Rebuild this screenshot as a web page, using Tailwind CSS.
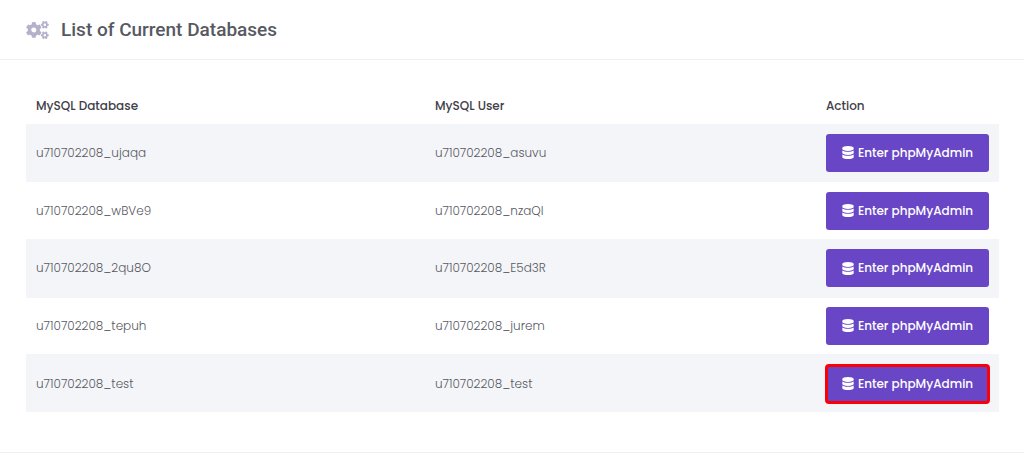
<!DOCTYPE html>
<html lang="en">
<head>
  <meta charset="UTF-8" />
  <meta name="viewport" content="width=device-width, initial-scale=1.0" />
  <title>List of Current Databases</title>
  <script src="https://cdn.jsdelivr.net/npm/@tailwindcss/browser@4"></script>
</head>
<body class="bg-white font-['Poppins','Inter',sans-serif]">
  <!-- shared icons -->
  <svg class="hidden">
    <symbol id="icon-database" viewBox="0 0 448 512">
      <path d="M448 73.143v45.714C448 159.143 347.667 192 224 192S0 159.143 0 118.857V73.143C0 32.857 100.333 0 224 0s224 32.857 224 73.143zM448 176v102.857C448 319.143 347.667 352 224 352S0 319.143 0 278.857V176c48.125 33.143 136.208 48.572 224 48.572S399.874 209.143 448 176zm0 160v102.857C448 479.143 347.667 512 224 512S0 479.143 0 438.857V336c48.125 33.143 136.208 48.572 224 48.572S399.874 369.143 448 336z" />
    </symbol>
    <symbol id="icon-cogs" viewBox="0 0 640 512">
      <path id="small-cog" d="M512.1 191l-8.2 14.3c-3 5.3-9.4 7.5-15.1 5.4-11.8-4.4-22.6-10.7-32.1-18.6-4.6-3.8-5.8-10.5-2.8-15.7l8.2-14.3c-6.9-8-12.3-17.3-15.9-27.4h-16.5c-6 0-11.2-4.3-12.2-10.3-2-12-2.1-24.6 0-37.1 1-6 6.2-10.4 12.2-10.4h16.5c3.6-10.1 9-19.4 15.9-27.4l-8.2-14.3c-3-5.2-1.9-11.9 2.8-15.7 9.5-7.9 20.4-14.2 32.1-18.6 5.7-2.1 12.1.1 15.1 5.4l8.2 14.3c10.5-1.9 21.2-1.9 31.7 0L552 6.3c3-5.3 9.4-7.5 15.1-5.4 11.8 4.4 22.6 10.7 32.1 18.6 4.6 3.8 5.8 10.5 2.8 15.7l-8.2 14.3c6.9 8 12.3 17.3 15.9 27.4h16.5c6 0 11.2 4.3 12.2 10.3 2 12 2.1 24.6 0 37.1-1 6-6.2 10.4-12.2 10.4h-16.5c-3.6 10.1-9 19.4-15.9 27.4l8.2 14.3c3 5.2 1.9 11.9-2.8 15.7-9.5 7.9-20.4 14.2-32.1 18.6-5.7 2.1-12.1-.1-15.1-5.4l-8.2-14.3c-10.4 1.9-21.2 1.9-31.7 0zm-10.5-58.8c38.5 29.6 82.4-14.3 52.8-52.8-38.5-29.7-82.4 14.3-52.8 52.8z" />
      <use href="#small-cog" y="299" />
      <path d="M386.3 286.1l33.7 16.8c10.1 5.8 14.5 18.1 10.5 29.1-8.9 24.2-26.4 46.4-42.6 65.8-7.4 8.9-20.2 11.1-30.3 5.3l-29.1-16.8c-16 13.7-34.6 24.6-54.9 31.7v33.6c0 11.6-8.3 21.6-19.7 23.6-24.6 4.2-50.4 4.4-75.9 0-11.5-2-20-11.9-20-23.6V418c-20.3-7.2-38.9-18-54.9-31.7L74 403c-10 5.8-22.9 3.6-30.3-5.3-16.2-19.4-33.3-41.6-42.2-65.7-4-10.9.4-23.2 10.5-29.1l33.3-16.8c-3.9-20.9-3.9-42.4 0-63.4L12 205.8c-10.1-5.8-14.6-18.1-10.5-29 8.9-24.2 26-46.4 42.2-65.8 7.4-8.9 20.2-11.1 30.3-5.3l29.1 16.8c16-13.7 34.6-24.6 54.9-31.7V57.1c0-11.5 8.2-21.5 19.6-23.5 24.6-4.2 50.5-4.4 76-.1 11.5 2 20 11.9 20 23.6v33.6c20.3 7.2 38.9 18 54.9 31.7l29.1-16.8c10-5.8 22.9-3.6 30.3 5.3 16.2 19.4 33.2 41.6 42.1 65.8 4 10.9.1 23.2-10 29.1l-33.7 16.8c3.9 21 3.9 42.5 0 63.5zm-117.6 21.1c59.2-77-28.7-164.9-105.7-105.7-59.2 77 28.7 164.9 105.7 105.7z" />
    </symbol>
  </svg>

  <section class="border-b border-[#f0f0f4]">
    <header class="flex items-center gap-3 h-[60px] px-[26px] border-b border-[#f0f0f4]">
      <svg class="w-[23px] h-[18px] fill-[#b4b1cb]" aria-hidden="true"><use href="#icon-cogs" /></svg>
      <h1 class="font-['Roboto',sans-serif] text-[19px] leading-6 font-medium text-[#575962]">List of Current Databases</h1>
    </header>

    <div class="pt-[26px] pb-10 pl-[26px] pr-[25px]">
      <table class="w-full table-fixed h-[326px] text-xs leading-5 text-left">
        <thead>
          <tr class="h-[38px] text-[#3f4047]">
            <th class="w-[41%] px-[10px] pt-0.5 font-medium">MySQL Database</th>
            <th class="px-[10px] pt-0.5 font-medium">MySQL User</th>
            <th class="w-[183px] px-[10px] pt-0.5 font-medium">Action</th>
          </tr>
        </thead>
        <tbody class="font-light text-[#575962]">
          <tr class="odd:bg-[#f4f5f8] border-t border-[#f4f5f8]">
            <td class="px-[10px]">u710702208_ujaqa</td>
            <td class="px-[10px]">u710702208_asuvu</td>
            <td class="px-[10px] py-[9px]">
              <button type="button" class="flex items-center justify-center gap-1 w-full h-[38px] rounded-[3px] bg-[#6846c6] text-white font-medium whitespace-nowrap">
                <svg class="w-3 h-[13px] fill-current" aria-hidden="true"><use href="#icon-database" /></svg>
                Enter phpMyAdmin
              </button>
            </td>
          </tr>
          <tr class="odd:bg-[#f4f5f8] border-t border-[#f4f5f8]">
            <td class="px-[10px]">u710702208_wBVe9</td>
            <td class="px-[10px]">u710702208_nzaQI</td>
            <td class="px-[10px] py-[9px]">
              <button type="button" class="flex items-center justify-center gap-1 w-full h-[38px] rounded-[3px] bg-[#6846c6] text-white font-medium whitespace-nowrap">
                <svg class="w-3 h-[13px] fill-current" aria-hidden="true"><use href="#icon-database" /></svg>
                Enter phpMyAdmin
              </button>
            </td>
          </tr>
          <tr class="odd:bg-[#f4f5f8] border-t border-[#f4f5f8]">
            <td class="px-[10px]">u710702208_2qu8O</td>
            <td class="px-[10px]">u710702208_E5d3R</td>
            <td class="px-[10px] py-[9px]">
              <button type="button" class="flex items-center justify-center gap-1 w-full h-[38px] rounded-[3px] bg-[#6846c6] text-white font-medium whitespace-nowrap">
                <svg class="w-3 h-[13px] fill-current" aria-hidden="true"><use href="#icon-database" /></svg>
                Enter phpMyAdmin
              </button>
            </td>
          </tr>
          <tr class="odd:bg-[#f4f5f8] border-t border-[#f4f5f8]">
            <td class="px-[10px]">u710702208_tepuh</td>
            <td class="px-[10px]">u710702208_jurem</td>
            <td class="px-[10px] py-[9px]">
              <button type="button" class="flex items-center justify-center gap-1 w-full h-[38px] rounded-[3px] bg-[#6846c6] text-white font-medium whitespace-nowrap">
                <svg class="w-3 h-[13px] fill-current" aria-hidden="true"><use href="#icon-database" /></svg>
                Enter phpMyAdmin
              </button>
            </td>
          </tr>
          <tr class="odd:bg-[#f4f5f8] border-t border-[#f4f5f8]">
            <td class="px-[10px]">u710702208_test</td>
            <td class="px-[10px]">u710702208_test</td>
            <td class="px-[10px] py-[9px]">
              <button type="button" class="flex items-center justify-center gap-1 w-full h-[38px] rounded-[3px] bg-[#6846c6] text-white font-medium whitespace-nowrap outline-3 -outline-offset-2 outline-[#fb0007]">
                <svg class="w-3 h-[13px] fill-current" aria-hidden="true"><use href="#icon-database" /></svg>
                Enter phpMyAdmin
              </button>
            </td>
          </tr>
        </tbody>
      </table>
    </div>
  </section>
</body>
</html>
